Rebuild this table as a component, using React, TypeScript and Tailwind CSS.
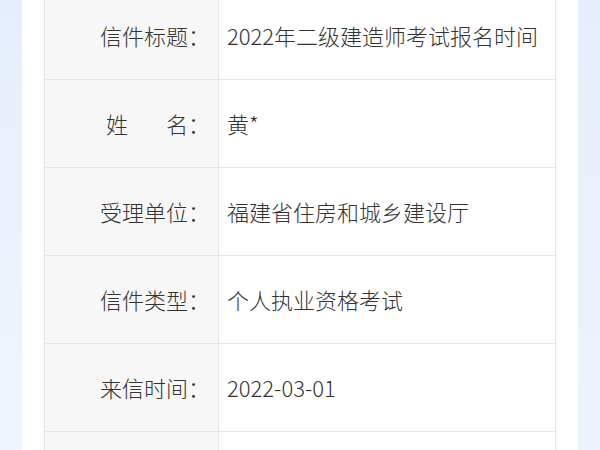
const rows: { label: React.ReactNode; value: string }[] = [
  { label: '信件标题：', value: '2022年二级建造师考试报名时间' },
  {
    label: (
      <>
        <span className="mr-[38px]">姓</span>名：
      </>
    ),
    value: '黄*',
  },
  { label: '受理单位：', value: '福建省住房和城乡建设厅' },
  { label: '信件类型：', value: '个人执业资格考试' },
  { label: '来信时间：', value: '2022-03-01' },
  { label: '', value: '' },
];

export default function App() {
  return (
    <div
      className="w-[600px] h-[450px] overflow-hidden flex bg-[#e9f0fb] text-[#333]"
      style={{ fontFamily: '"Noto Sans CJK SC", "Noto Sans", sans-serif' }}
    >
      <div className="w-[22px] flex-shrink-0 bg-gradient-to-b from-[#e6eefb] to-[#f0f5fd]" />
      <div className="w-[556px] flex-shrink-0 bg-white px-[22px]">
        {/* Letter detail table */}
        <div className="-mt-[9px] border-x border-t border-[#e6e6e6]">
          {rows.map((r, i) => (
            <div key={i} className="flex h-[88px] border-b border-[#e6e6e6]">
              <div className="w-[174px] flex-shrink-0 flex items-center justify-end pr-[8px] bg-[#f7f7f7] border-r border-[#e6e6e6] text-[22px] font-light">
                {r.label}
              </div>
              <div className="flex-1 flex items-center pl-[8px] text-[22px] font-light">{r.value}</div>
            </div>
          ))}
        </div>
      </div>
      <div className="flex-1 bg-gradient-to-b from-[#e6eefb] to-[#edf3fc]" />
    </div>
  );
}
